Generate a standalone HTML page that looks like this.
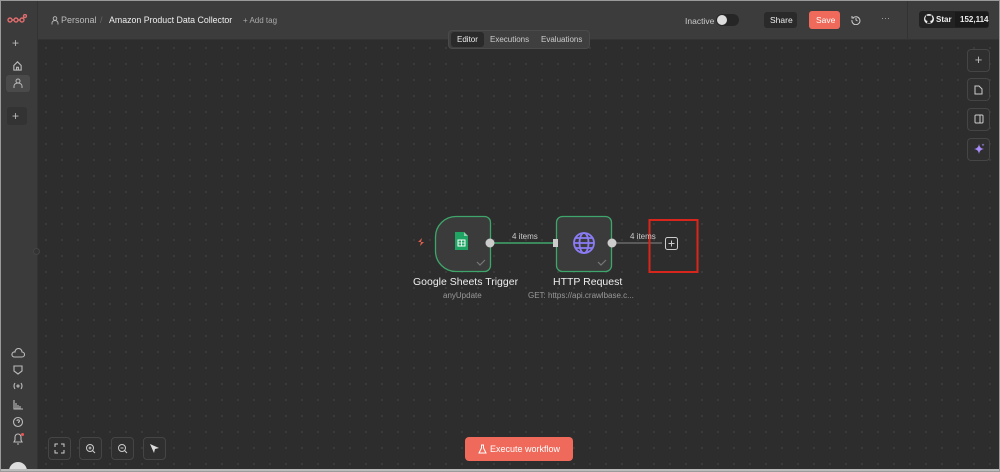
<!DOCTYPE html>
<html><head><meta charset="utf-8"><style>
*{box-sizing:border-box;margin:0;padding:0}
html,body{width:1000px;height:472px;overflow:hidden}
body{background:#2e2e2e;font-family:"Liberation Sans",sans-serif;color:#ddd;position:relative}
.frame{position:absolute;inset:0;border:1px solid #9a9a9a;pointer-events:none;z-index:20}
.side{position:absolute;left:0;top:0;width:38px;height:472px;background:#3b3b3b;border-right:1px solid #333}
.hdr{position:absolute;left:38px;top:0;right:0;height:40px;background:#3c3c3c;border-bottom:1px solid #333}
.canvas{position:absolute;left:38px;top:40px;right:0;bottom:0;background-color:#2d2d2d;background-image:radial-gradient(#3e3e3e 0.8px,transparent 1px);background-size:16px 16px}
.t{position:absolute;font-size:9px;white-space:nowrap}
.btn{position:absolute;border:1px solid #454545;border-radius:4px;background:#2f2f2f}
.ic{position:absolute;color:#bbb;font-size:10px;text-align:center}
</style></head><body>
<div class="side"></div>
<div class="hdr"></div>
<div class="canvas"></div>
<svg style="position:absolute;left:7px;top:14px" width="20" height="10" viewBox="0 0 20 10"><g fill="none" stroke="#e06c6c" stroke-width="1.4"><circle cx="3" cy="6" r="2"/><circle cx="9" cy="6" r="2"/><circle cx="15" cy="6" r="2"/><circle cx="18" cy="2" r="1.5"/><path d="M11 6h2M5 6h2M16 5l1-2"/></g></svg>
<div class="ic" style="left:12px;top:36px;font-size:12px">+</div>
<svg style="position:absolute;left:12px;top:60px" width="11" height="11" viewBox="0 0 12 12"><path d="M2 6L6 2l4 4v5H2z M5 11V8h2v3" fill="none" stroke="#bbb" stroke-width="1.2"/></svg>
<div style="position:absolute;left:6px;top:75px;width:24px;height:17px;background:#4a4a4a;border-radius:3px"></div>
<svg style="position:absolute;left:13px;top:78px" width="10" height="11" viewBox="0 0 10 11"><circle cx="5" cy="3" r="2" fill="none" stroke="#bbb"/><path d="M1 10V8a4 3 0 0 1 8 0v2" fill="none" stroke="#bbb"/></svg>
<div style="position:absolute;left:7px;top:107px;width:20px;height:18px;background:#333;border-radius:3px"></div>
<div class="ic" style="left:12px;top:109px;font-size:12px">+</div>
<div style="position:absolute;left:33px;top:248px;width:7px;height:7px;border-radius:50%;background:#333;border:1px solid #444"></div>
<svg style="position:absolute;left:11px;top:348px" width="14" height="100" viewBox="0 0 14 100" fill="none" stroke="#bbb" stroke-width="1.1">
<path d="M3 9h8a2.5 2.5 0 0 0 0-5 3.5 3.5 0 0 0-7 0A2.5 2.5 0 0 0 3 9z"/>
<path d="M3 18h8v5l-4 3-4-3z"/>
<path d="M4 35q-2 3 0 6M10 35q2 3 0 6"/><circle cx="7" cy="38" r="1"/>
<path d="M3 52v9h9M5 61v-6M7 61v-4M9 61v-3"/>
<circle cx="7" cy="74" r="4.5"/><path d="M6 73a1.2 1.2 0 1 1 1.5 1.2v.8"/>
<path d="M3 94h8l-1-2v-3a3 3 0 0 0-6 0v3z M6 96h2"/>
</svg>
<div style="position:absolute;left:21px;top:433px;width:3px;height:3px;border-radius:50%;background:#e55"></div>
<div style="position:absolute;left:9px;top:462px;width:18px;height:18px;border-radius:50%;background:#ddd"></div>
<svg style="position:absolute;left:51px;top:16px" width="8" height="9" viewBox="0 0 8 9"><circle cx="4" cy="2.5" r="1.8" fill="none" stroke="#bbb" stroke-width=".9"/><path d="M1 8.5V7a3 2.5 0 0 1 6 0v1.5" fill="none" stroke="#bbb" stroke-width=".9"/></svg>
<div class="t" style="left:61px;top:15px;color:#bbb;font-size:9px">Personal</div>
<div class="t" style="left:100px;top:15px;color:#666;font-size:9px">/</div>
<div class="t" style="left:109px;top:15px;color:#eee;font-size:8.8px">Amazon Product Data Collector</div>
<div class="t" style="left:243px;top:16px;color:#aaa;font-size:8px">+ Add tag</div>
<div class="t" style="left:685px;top:16px;color:#ccc;font-size:8.5px">Inactive</div>
<div style="position:absolute;left:716px;top:14px;width:23px;height:12px;border-radius:6px;background:#262626"></div>
<div style="position:absolute;left:717px;top:15px;width:10px;height:10px;border-radius:50%;background:#ddd"></div>
<div style="position:absolute;left:764px;top:12px;width:33px;height:16px;background:#2a2a2a;border-radius:3px"></div>
<div class="t" style="left:770px;top:15px;color:#eee;font-size:8.5px">Share</div>
<div style="position:absolute;left:809px;top:11px;width:31px;height:18px;background:#f06a5b;border-radius:3px"></div>
<div class="t" style="left:816px;top:15px;color:#fff;font-size:8.5px">Save</div>
<svg style="position:absolute;left:851px;top:15px" width="10" height="10" viewBox="0 0 10 10" fill="none" stroke="#ccc" stroke-width="1"><path d="M2 3a4 4 0 1 1-1 2M1 1v2h2M5 3v2l1.5 1"/></svg>
<div class="t" style="left:881px;top:13px;color:#aaa;font-size:9px">···</div>
<div style="position:absolute;left:907px;top:0;width:1px;height:40px;background:#333"></div>
<div style="position:absolute;left:919px;top:11px;width:70px;height:17px;background:#222;border-radius:3px"></div>
<div style="position:absolute;left:955px;top:12px;width:33px;height:15px;background:#1a1a1a"></div>
<svg style="position:absolute;left:924px;top:14px" width="10" height="10" viewBox="0 0 16 16"><circle cx="8" cy="8" r="8" fill="#eee"/><path d="M5 15c0-2 0-3 1-4-2 0-4-1-4-4 0-1 .5-2 1-2.5 0-1 0-2 .3-2.5 1 0 2 .7 2.5 1a7 7 0 0 1 4 0c.5-.3 1.500-1 2.500-1 .3.5.3 1.500.3 2.500.5.500 1 1.500 1 2.500 0 3-2 4-4 4 1 1 1 2 1 4z" fill="#222"/></svg>
<div class="t" style="left:936px;top:15px;color:#eee;font-size:8px;font-weight:bold">Star</div>
<div class="t" style="left:960px;top:15px;color:#eee;font-size:8px;font-weight:bold">152,114</div>
<div style="position:absolute;left:448px;top:30px;width:142px;height:19px;background:#3f3f3f;border:1px solid #4a4a4a;border-radius:4px"></div>
<div style="position:absolute;left:451px;top:32px;width:33px;height:15px;background:#2a2a2a;border-radius:3px"></div>
<div class="t" style="left:457px;top:35px;color:#eee;font-size:8px">Editor</div>
<div class="t" style="left:490px;top:35px;color:#ccc;font-size:8px">Executions</div>
<div class="t" style="left:541px;top:35px;color:#ccc;font-size:8px">Evaluations</div>
<div class="btn" style="left:967px;top:49px;width:23px;height:23px"></div><div class="ic" style="left:967px;top:52px;width:23px;font-size:13px">+</div>
<div class="btn" style="left:967px;top:78px;width:23px;height:23px"></div>
<svg style="position:absolute;left:974px;top:85px" width="9" height="10" viewBox="0 0 9 10" fill="none" stroke="#ccc"><path d="M1 1h4l3 3v5H1z"/></svg>
<div class="btn" style="left:967px;top:108px;width:23px;height:23px"></div>
<svg style="position:absolute;left:974px;top:114px" width="10" height="10" viewBox="0 0 10 10" fill="none" stroke="#ccc"><rect x="1" y="1" width="8" height="8" rx="1"/><path d="M6 1v8"/></svg>
<div class="btn" style="left:967px;top:138px;width:23px;height:23px"></div>
<svg style="position:absolute;left:973px;top:143px" width="12" height="12" viewBox="0 0 12 12"><path d="M6 1Q6.5 5.5 11 6 6.5 6.5 6 11 5.5 6.5 1 6 5.5 5.5 6 1z" fill="#a78bfa"/><path d="M10 0.5l.4 1 1 .4-1 .4-.4 1-.4-1-1-.4 1-.4z" fill="#a78bfa"/></svg>
<svg style="position:absolute;left:0;top:0" width="1000" height="472">
<path d="M490 243H556" stroke="#3fa66b" stroke-width="1.5"/>
<path d="M612 243H662" stroke="#888" stroke-width="1"/>
<path d="M484.5 216.5a6 6 0 0 1 6 6v43a6 6 0 0 1-6 6H456a20.5 20.5 0 0 1-20.5-20.5v-14a20.5 20.5 0 0 1 20.5-20.5z" fill="#3b3b3b" stroke="#3fa66b" stroke-width="1.3"/>
<rect x="556.5" y="216.5" width="55" height="55" rx="6" fill="#3b3b3b" stroke="#3fa66b" stroke-width="1.3"/>
<circle cx="490" cy="243" r="4.5" fill="#ccc"/>
<circle cx="612" cy="243" r="4.5" fill="#ccc"/>
<rect x="553" y="239" width="5" height="8" fill="#ccc"/>
<path d="M418 242l4-4-1 4 3 0-4 4 1-4z" fill="#e0604f"/>
<path d="M455 232h9l4 4v14h-13z" fill="#1fa463"/><path d="M464 232v4h4" fill="#8ed1b0"/>
<rect x="458" y="240" width="7" height="6" fill="none" stroke="#fff" stroke-width="1"/><path d="M458 243h7M461.5 240v6" stroke="#fff" stroke-width=".8"/>
<g fill="none" stroke="#8b7cf6" stroke-width="1.8"><circle cx="584" cy="243" r="10"/><ellipse cx="584" cy="243" rx="4.5" ry="10"/><path d="M574 243h20M576 238h16M576 248h16"/></g>
<path d="M477 262l3 3 5-5" stroke="#777" fill="none" stroke-width="1.2"/>
<path d="M598 262l3 3 5-5" stroke="#777" fill="none" stroke-width="1.2"/>
<rect x="665.5" y="237.5" width="12" height="12" rx="2" fill="#2d2d2d" stroke="#ccc"/><path d="M671.5 240.5v6M668.5 243.5h6" stroke="#ccc"/>
<rect x="649.5" y="220" width="48" height="52" fill="none" stroke="#d9261c" stroke-width="2"/>
</svg>
<div class="t" style="left:512px;top:232px;color:#ccc;font-size:8px">4 items</div>
<div class="t" style="left:630px;top:232px;color:#ccc;font-size:8px">4 items</div>
<div class="t" style="left:413px;top:276px;color:#eee;font-size:10.5px">Google Sheets Trigger</div>
<div class="t" style="left:443px;top:291px;color:#999;font-size:8px">anyUpdate</div>
<div class="t" style="left:553px;top:276px;color:#eee;font-size:10.5px">HTTP Request</div>
<div class="t" style="left:528px;top:291px;color:#999;font-size:8px">GET: https://api.crawlbase.c...</div>
<div class="btn" style="left:48px;top:437px;width:23px;height:23px"></div>
<svg style="position:absolute;left:54px;top:443px" width="11" height="11" viewBox="0 0 11 11" fill="none" stroke="#ccc"><path d="M1 4V1h3M7 1h3v3M10 7v3H7M4 10H1V7"/></svg>
<div class="btn" style="left:79px;top:437px;width:23px;height:23px"></div>
<svg style="position:absolute;left:85px;top:443px" width="11" height="11" viewBox="0 0 11 11" fill="none" stroke="#ccc"><circle cx="5" cy="5" r="3.5"/><path d="M7.5 7.5L10 10M3.5 5h3M5 3.5v3"/></svg>
<div class="btn" style="left:111px;top:437px;width:23px;height:23px"></div>
<svg style="position:absolute;left:117px;top:443px" width="11" height="11" viewBox="0 0 11 11" fill="none" stroke="#ccc"><circle cx="5" cy="5" r="3.5"/><path d="M7.5 7.5L10 10M3.5 5h3"/></svg>
<div class="btn" style="left:143px;top:437px;width:23px;height:23px"></div>
<svg style="position:absolute;left:149px;top:443px" width="11" height="11" viewBox="0 0 11 11"><path d="M1 1l9 4-4 1-1 4z" fill="#ddd"/></svg>
<div style="position:absolute;left:465px;top:437px;width:108px;height:24px;background:#f06a5b;border-radius:4px"></div>
<svg style="position:absolute;left:478px;top:444px" width="9" height="10" viewBox="0 0 9 10" fill="none" stroke="#fff"><path d="M3 1h3M3.5 1v3L1 9h7L5.5 4V1"/></svg>
<div class="t" style="left:490px;top:444px;color:#fff;font-size:9px">Execute workflow</div>
<div style="position:absolute;left:0;top:469px;width:1000px;height:3px;background:#bbb"></div>
<div class="frame"></div>
</body></html>
